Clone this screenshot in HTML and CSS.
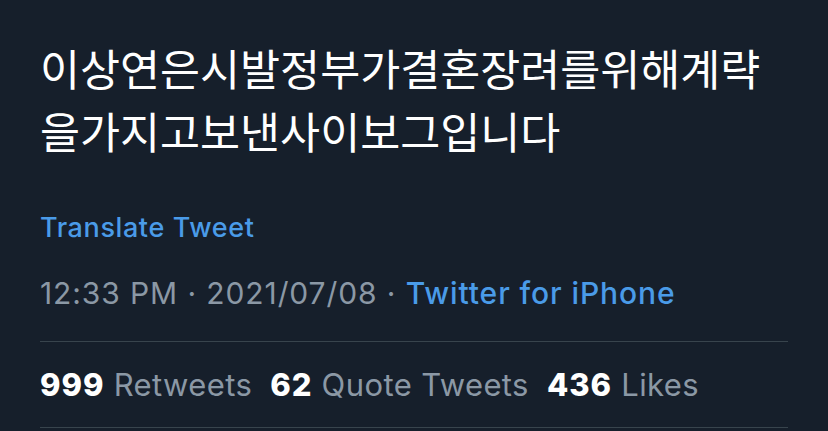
FILE: index.html
```html
<!DOCTYPE html>
<html lang="ko">
<head>
<meta charset="utf-8">
<link rel="stylesheet" href="styles.css">
</head>
<body>
<div class="tweet">
  <p class="text">이상연은시발정부가결혼장려를위해계략<br>을가지고보낸사이보그입니다</p>
  <a class="translate">Translate Tweet</a>
  <div class="meta"><span>12:33 PM · 2021/07/08 · </span><a class="source">Twitter for iPhone</a></div>
  <div class="stats">
    <span class="stat"><b>999</b> Retweets</span>
    <span class="stat"><b>62</b> Quote Tweets</span>
    <span class="stat"><b>436</b> Likes</span>
  </div>
</div>
</body>
</html>
```
FILE: styles.css
```css
html, body { margin: 0; padding: 0; }
body {
  background: #161f2b;
  width: 828px;
  height: 431px;
  overflow: hidden;
  font-family: Inter, "Noto Sans", sans-serif;
}
.tweet {
  padding: 0 40px;
  display: flex;
  flex-direction: column;
}
.text {
  margin: 36px 0 0;
  font-family: "Noto Sans CJK KR", sans-serif;
  font-size: 43.5px;
  line-height: 63px;
  color: #ffffff;
}
.translate {
  margin-top: 49px;
  font-size: 27px;
  line-height: 34px;
  font-weight: 500;
  letter-spacing: 0.6px;
  color: #4a9be8;
}
.meta {
  margin-top: 30px;
  font-size: 30px;
  line-height: 36px;
  letter-spacing: 0.9px;
  color: #8b98a5;
}
.source { color: #4a9be8; font-weight: 500; }
.stats {
  margin-top: 30px;
  border-top: 1px solid #38444d;
  border-bottom: 1px solid #38444d;
  height: 85px;
  display: flex;
  align-items: center;
  gap: 18px;
  font-size: 31px;
  letter-spacing: 0.4px;
  color: #8b98a5;
}
.stats b { color: #fff; font-weight: 800; letter-spacing: 1px; }
```
